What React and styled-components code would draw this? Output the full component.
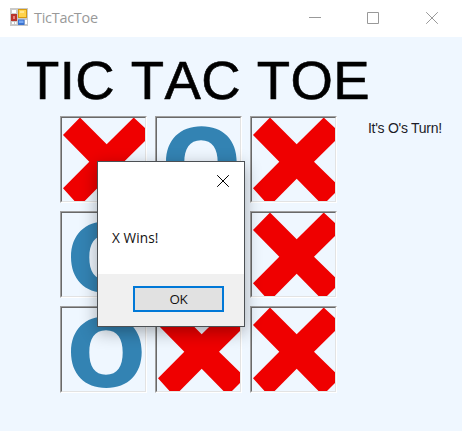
import React from 'react';
import styled, { createGlobalStyle } from 'styled-components';

const Global = createGlobalStyle`
  * { box-sizing: border-box; }
  html, body { margin: 0; padding: 0; overflow: hidden; background: #eff7ff; }
  svg { display: block; }
`;

const Window = styled.div`
  position: relative;
  width: 462px;
  height: 431px;
  overflow: hidden;
  background: #eff7ff;
  font-family: "Liberation Sans", sans-serif;
`;

const TitleBar = styled.header`
  display: flex;
  align-items: flex-start;
  height: 37px;
  padding-left: 10px;
  background: #fff;
`;

const AppIcon = styled.svg`
  flex: none;
  width: 18px;
  height: 18px;
  margin-top: 8px;
`;

const AppName = styled.span`
  flex: 1;
  margin-left: 6px;
  font: 14.4px/36px "Open Sans", sans-serif;
  letter-spacing: -0.24px;
  color: #999;
  white-space: nowrap;
`;

const Controls = styled.div`
  display: grid;
  grid-template-columns: 58px 59px 12px;
  margin: 12px 24px 0 0;
`;

const ControlIcon = styled.svg`
  width: 12px;
  height: 12px;
  fill: none;
  stroke: ${(p) => p.$color || '#999'};
  stroke-width: 1;
`;

const Heading = styled.h1`
  margin: 0;
  height: 79px;
  padding: 13px 0 0 26px;
  font-size: 54.5px;
  font-weight: 400;
  line-height: 62px;
  font-kerning: none;
  letter-spacing: 0.45px;
  -webkit-text-stroke: 0.6px #000;
  color: #000;
  white-space: nowrap;
`;

const Content = styled.main`
  display: flex;
  padding-left: 60px;
`;

const Board = styled.div`
  flex: none;
  display: grid;
  grid-template-columns: repeat(3, 87px);
  grid-auto-rows: 87px;
  gap: 8px;
`;

const Cell = styled.div`
  border: 1px solid;
  border-color: #a0a0a0 #fff #fff #a0a0a0;
`;

const CellInner = styled.div`
  width: 85px;
  height: 85px;
  border: 1px solid;
  border-color: #696969 #e3e3e3 #e3e3e3 #696969;
`;

const Mark = styled.svg`
  width: 83px;
  height: 83px;
`;

const Status = styled.p`
  margin: 4px 0 0 31px;
  font-size: 14px;
  line-height: 16px;
  letter-spacing: -0.28px;
  color: #1c1c28;
  white-space: nowrap;
`;

const Dialog = styled.div`
  position: absolute;
  left: 97px;
  top: 161px;
  display: flex;
  flex-direction: column;
  width: 148px;
  height: 166px;
  border: 1px solid #4c5054;
  background: #fff;
  box-shadow: 0 5px 16px rgba(0, 0, 0, 0.32);
  font-family: "Open Sans", sans-serif;
`;

const DialogTop = styled.div`
  display: flex;
  justify-content: flex-end;
  height: 65px;
  padding: 13px 15px 0 0;
`;

const Message = styled.p`
  flex: 1;
  margin: 0;
  padding-left: 14px;
  font-size: 13.6px;
  line-height: 22px;
  letter-spacing: 0.1px;
  color: #111;
`;

const DialogFooter = styled.div`
  display: flex;
  justify-content: flex-end;
  height: 52px;
  padding: 12px 20px 0 0;
  background: #f0f0f0;
`;

const OkButton = styled.button`
  width: 91px;
  height: 26px;
  padding: 0;
  border: 2px solid #0078d7;
  background: #e1e1e1;
  font: 13.4px/22px "Open Sans", sans-serif;
  letter-spacing: -0.3px;
  color: #111;
`;

const Cross = () => (
  <Mark viewBox="2 2 83 83">
    <path
      fill="#ef0000"
      d="M20 1.5 46.7 28.3 73.7 1.5 86 13V24L64 45.7 86 67.3V76L76.5 85.5H69L46.7 62.7 24.7 85H14.5L3 72.3 29.3 45.7 3 19Z"
    />
  </Mark>
);

const Nought = () => (
  <Mark viewBox="2 2 83 83">
    <path
      fill="#3383b3"
      fillRule="evenodd"
      d="M46.5 10.3C68 10.3 81.7 24 81.7 46S68 82 46.3 82 11 68 11 46 25 10.3 46.5 10.3ZM46 24.3C34.5 24.3 29.3 33 29.3 46.5S34.5 68.7 46 68.7 62.7 60 62.7 46.5 57.5 24.3 46 24.3Z"
    />
  </Mark>
);

const CloseIcon = ({ color }) => (
  <ControlIcon $color={color} viewBox="0 0 12 12">
    <path d="M0.2.2 11.8 11.8M11.8.2.2 11.8" />
  </ControlIcon>
);

const board = ['X', 'O', 'X', 'O', 'O', 'X', 'O', 'X', 'X'];

export default function App() {
  return (
    <Window>
      <Global />
      <TitleBar>
        <AppIcon viewBox="0 0 18 18">
          <path fill="#c9c9c9" d="M0 0H18V18H0Z" />
          <path fill="#fff" d="M2 2H6V5H2ZM2 14H4V16H2ZM5 14H6.5V16H5ZM15 12H17V16H15Z" />
          <path fill="#b9342c" d="M1 6H7V13H1Z" />
          <path fill="#e98078" d="M3 8H5V11H3Z" />
          <path fill="#d59a12" d="M8 1H17V10H8Z" />
          <path fill="#ffd24a" d="M9 2H16V9H9Z" />
          <path fill="#ffe58c" d="M10 3H14V5H10Z" />
          <path fill="#3b73cf" d="M8 11.5H14.5V17H8Z" />
          <path fill="#75a7f3" d="M9 12.5H13.5V15H9Z" />
        </AppIcon>
        <AppName>TicTacToe</AppName>
        <Controls>
          <ControlIcon viewBox="0 0 12 12"><path d="M0 5.5H12" /></ControlIcon>
          <ControlIcon viewBox="0 0 12 12"><path d="M.5.5H11.5V11.5H.5Z" /></ControlIcon>
          <CloseIcon />
        </Controls>
      </TitleBar>
      <Heading>TIC TAC TOE</Heading>
      <Content>
        <Board>
          {board.map((mark, i) => (
            <Cell key={i}>
              <CellInner>{mark === 'X' ? <Cross /> : <Nought />}</CellInner>
            </Cell>
          ))}
        </Board>
        <Status>It's O's Turn!</Status>
      </Content>
      <Dialog role="dialog">
        <DialogTop><CloseIcon color="#000" /></DialogTop>
        <Message>X Wins!</Message>
        <DialogFooter><OkButton>OK</OkButton></DialogFooter>
      </Dialog>
    </Window>
  );
}
